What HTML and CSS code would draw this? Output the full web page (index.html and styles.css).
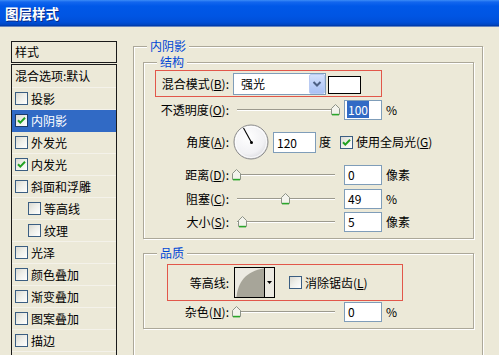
FILE: index.html
```html
<!DOCTYPE html>
<html lang="zh-CN">
<head>
<meta charset="utf-8">
<title>图层样式</title>
<link rel="stylesheet" href="styles.css">
</head>
<body>
<div class="titlebar">图层样式</div>
<div class="main">
  <div class="sidebar">
    <div class="side-head">样式</div>
    <ul class="style-list">
      <li class="item opt">混合选项:默认</li>
      <li class="item"><span class="cb"></span>投影</li>
      <li class="item selected"><span class="cb"><svg class="tick" viewBox="0 0 11 11"><path d="M2 5.2 L4.3 7.6 L9 2.8"/></svg></span>内阴影</li>
      <li class="item"><span class="cb"></span>外发光</li>
      <li class="item"><span class="cb"><svg class="tick" viewBox="0 0 11 11"><path d="M2 5.2 L4.3 7.6 L9 2.8"/></svg></span>内发光</li>
      <li class="item"><span class="cb"></span>斜面和浮雕</li>
      <li class="item sub"><span class="cb"></span>等高线</li>
      <li class="item sub"><span class="cb"></span>纹理</li>
      <li class="item"><span class="cb"></span>光泽</li>
      <li class="item"><span class="cb"></span>颜色叠加</li>
      <li class="item"><span class="cb"></span>渐变叠加</li>
      <li class="item"><span class="cb"></span>图案叠加</li>
      <li class="item"><span class="cb"></span>描边</li>
    </ul>
  </div>

  <fieldset class="group outer">
    <legend>内阴影</legend>

    <fieldset class="group inner struct">
      <legend>结构</legend>

      <div class="hlbox blend">
        <span class="lbl blend-lbl">混合模式(<u>B</u>):</span>
        <div class="select">
          <span class="select-val">强光</span>
          <span class="select-btn"><svg viewBox="0 0 16 20" width="16" height="20"><path d="M4.5 8 L8 11.5 L11.5 8" fill="none" stroke="#4d6185" stroke-width="2"/></svg></span>
        </div>
        <span class="swatch"></span>
      </div>

      <div class="row r-opacity">
        <span class="lbl">不透明度(<u>O</u>):</span>
        <div class="slider"><span class="track"></span><span class="thumb" style="left:99px"><svg viewBox="0 0 9 12" width="9" height="12"><path d="M0.5 4.5 L4.5 0.5 L8.5 4.5 V10.5 H0.5 Z" fill="#f3f3ec" stroke="#8d9387"/><path d="M1 10.6 H8" stroke="#2aa52a" stroke-width="1.6"/></svg></span></div>
        <div class="textbox w38"><span class="sel">100</span></div>
        <span class="unit">%</span>
      </div>

      <div class="row r-angle">
        <span class="lbl">角度(<u>A</u>):</span>
        <svg class="dial" viewBox="0 0 36 36" width="36" height="36">
          <defs>
            <radialGradient id="dialg" cx="0.4" cy="0.35" r="0.7">
              <stop offset="0" stop-color="#ffffff"/>
              <stop offset="0.7" stop-color="#f1f1f4"/>
              <stop offset="1" stop-color="#d9d9de"/>
            </radialGradient>
          </defs>
          <circle cx="18" cy="18" r="17" fill="url(#dialg)" stroke="#8a8a8a" stroke-width="1"/>
          <circle cx="18" cy="18" r="15.6" fill="none" stroke="#ffffff" stroke-width="0.8"/>
          <path d="M18.5 18.5 L10.5 4" stroke="#000" stroke-width="1.1"/>
          <circle cx="18.5" cy="18.5" r="1.5" fill="#000"/>
        </svg>
        <div class="textbox w43">120</div>
        <span class="deg">度</span>
        <span class="cb cb-global"><svg class="tick" viewBox="0 0 11 11"><path d="M2 5.2 L4.3 7.6 L9 2.8"/></svg></span>
        <span class="cb-text">使用全局光(<u>G</u>)</span>
      </div>

      <div class="row r-dist">
        <span class="lbl">距离(<u>D</u>):</span>
        <div class="slider"><span class="track"></span><span class="thumb" style="left:0px"><svg viewBox="0 0 9 12" width="9" height="12"><path d="M0.5 4.5 L4.5 0.5 L8.5 4.5 V10.5 H0.5 Z" fill="#f3f3ec" stroke="#8d9387"/><path d="M1 10.6 H8" stroke="#2aa52a" stroke-width="1.6"/></svg></span></div>
        <div class="textbox w38">0</div>
        <span class="unit">像素</span>
      </div>

      <div class="row r-choke">
        <span class="lbl">阻塞(<u>C</u>):</span>
        <div class="slider"><span class="track"></span><span class="thumb" style="left:49px"><svg viewBox="0 0 9 12" width="9" height="12"><path d="M0.5 4.5 L4.5 0.5 L8.5 4.5 V10.5 H0.5 Z" fill="#f3f3ec" stroke="#8d9387"/><path d="M1 10.6 H8" stroke="#2aa52a" stroke-width="1.6"/></svg></span></div>
        <div class="textbox w38">49</div>
        <span class="unit">%</span>
      </div>

      <div class="row r-size">
        <span class="lbl">大小(<u>S</u>):</span>
        <div class="slider"><span class="track"></span><span class="thumb" style="left:6px"><svg viewBox="0 0 9 12" width="9" height="12"><path d="M0.5 4.5 L4.5 0.5 L8.5 4.5 V10.5 H0.5 Z" fill="#f3f3ec" stroke="#8d9387"/><path d="M1 10.6 H8" stroke="#2aa52a" stroke-width="1.6"/></svg></span></div>
        <div class="textbox w38">5</div>
        <span class="unit">像素</span>
      </div>
    </fieldset>

    <fieldset class="group inner quality">
      <legend>品质</legend>

      <div class="hlbox contour-row">
        <span class="lbl contour-lbl">等高线:</span>
        <div class="contour">
          <svg class="contour-prev" viewBox="0 0 30 29" width="30" height="29">
            <rect x="0" y="0" width="30" height="29" fill="#eceae2"/>
            <path d="M1.5 29 C 3 14, 11 3, 29 0.5 L29 29 Z" fill="#a7a599"/>
            <path d="M29.5 0 V29" stroke="#000" stroke-width="1"/>
          </svg>
          <span class="contour-btn"><svg viewBox="0 0 9 29" width="9" height="29"><path d="M2 13 H7 L4.5 16 Z" fill="#000"/></svg></span>
        </div>
        <span class="cb cb-aa"></span>
        <span class="cb-text">消除锯齿(<u>L</u>)</span>
      </div>

      <div class="row r-noise">
        <span class="lbl">杂色(<u>N</u>):</span>
        <div class="slider"><span class="track"></span><span class="thumb" style="left:0px"><svg viewBox="0 0 9 12" width="9" height="12"><path d="M0.5 4.5 L4.5 0.5 L8.5 4.5 V10.5 H0.5 Z" fill="#f3f3ec" stroke="#8d9387"/><path d="M1 10.6 H8" stroke="#2aa52a" stroke-width="1.6"/></svg></span></div>
        <div class="textbox w38">0</div>
        <span class="unit">%</span>
      </div>
    </fieldset>
  </fieldset>
</div>
</body>
</html>
```

FILE: styles.css
```css
html, body {
  margin: 0;
  padding: 0;
}

body {
  width: 499px;
  height: 355px;
  overflow: hidden;
  background: #ece9d8;
  font-family: "Noto Sans CJK SC", "Noto Sans", "DejaVu Sans", sans-serif;
  font-size: 12px;
  line-height: 14px;
  color: #000;
}

u {
  text-decoration: underline;
  text-underline-offset: 1px;
}

/* ---------- title bar ---------- */
.titlebar {
  height: 27px;
  box-sizing: border-box;
  padding-left: 5px;
  line-height: 27px;
  color: #fff;
  font-weight: bold;
  font-size: 13.5px;
  text-shadow: 1px 1px 0 #0c2c86;
  background: linear-gradient(#3c8cf7 0px, #1366ee 2px, #0058e8 6px, #0055e3 16px, #004fd8 22px, #0045c0 25px, #00339a 26px, #c9d6e6 27px);
}

/* ---------- main area ---------- */
.main {
  display: flex;
  align-items: flex-start;
  padding: 13px 0 0 11px;
}

/* ---------- left style list ---------- */
.sidebar {
  width: 106px;
  margin-top: 1px;
  flex: none;
}

.side-head {
  height: 22px;
  box-sizing: border-box;
  border: 1px solid #1a1a1a;
  padding-left: 3px;
  line-height: 19px;
}

.style-list {
  list-style: none;
  margin: 1px 0 0;
  padding: 0;
  height: 291px;
  overflow: hidden;
  border: 1px solid #1a1a1a;
  border-bottom: none;
}

.item {
  height: 22px;
  box-sizing: border-box;
  display: flex;
  align-items: center;
  padding-left: 3px;
  border-bottom: 1px solid #f4f2ea;
  white-space: nowrap;
}

.item.opt {
  height: 23px;
}

.item.sub {
  padding-left: 16px;
}

.item.selected {
  background: #316ac5;
  color: #fff;
  border-bottom-color: #316ac5;
}

/* ---------- checkbox ---------- */
.cb {
  flex: none;
  width: 13px;
  height: 13px;
  box-sizing: border-box;
  border: 1px solid #3b5e82;
  background: linear-gradient(135deg, #dad9d1 0%, #eeeee9 45%, #ffffff 100%);
  margin-right: 3px;
  display: inline-flex;
}

.item.selected .cb {
  border-color: #1c3a6a;
}

.tick {
  width: 11px;
  height: 11px;
  fill: none;
  stroke: #21a121;
  stroke-width: 2;
}

/* ---------- group boxes ---------- */
.group {
  margin: 0;
  padding: 0;
  min-width: 0;
  border: 1px solid #aca899;
  box-shadow: inset 1px 1px 0 #fff, 1px 1px 0 #fff;
}

.group > legend {
  padding: 0 3px 2px;
  margin-left: 13px;
  line-height: 11px;
  height: 11px;
  color: #0046d5;
  background: #ece9d8;
}

.outer {
  margin-left: 16px;
  width: 350px;
  box-sizing: border-box;
  height: 316px;
  flex: none;
}

.inner {
  margin: 3px 8px 0 9px;
}

.struct {
  padding-bottom: 6px;
}

.quality {
  margin-top: 8px;
  padding-bottom: 6px;
}

/* ---------- rows ---------- */
.row {
  display: flex;
  align-items: center;
  height: 20px;
}

.lbl {
  flex: none;
  width: 85px;
  text-align: right;
  white-space: nowrap;
}

.r-opacity { margin-top: 3px; }
.r-angle { margin-top: 4px; height: 36px; }
.r-dist { margin-top: 5px; }
.r-choke { margin-top: 4px; }
.r-size { margin-top: 3px; }
.r-noise { margin-top: 1px; }

/* highlighted (red framed) rows */
.hlbox {
  display: flex;
  align-items: center;
  box-sizing: border-box;
  border: 1px solid #e2574a;
}

.blend {
  margin: 1px 0 0 11px;
  width: 227px;
  height: 27px;
}

.blend-lbl {
  width: 73px;
}

.contour-row {
  margin: 4px 0 0 23px;
  width: 236px;
  height: 37px;
}

.contour-lbl {
  width: 61px;
}

/* select */
.select {
  flex: none;
  margin-left: 4px;
  width: 93px;
  height: 22px;
  box-sizing: border-box;
  border: 1px solid #7f9db9;
  background: #fff;
  display: flex;
  align-items: center;
  padding: 0 0 0 7px;
}

.select-val {
  flex: 1;
}

.select-btn {
  width: 16px;
  height: 20px;
  box-sizing: border-box;
  border: 1px solid #b9cbf3;
  border-radius: 2px;
  background: linear-gradient(#d4e1fc, #b8cdf8 60%, #aac2f5);
  display: flex;
}

.select-btn svg {
  margin: -1px;
}

.swatch {
  flex: none;
  margin-left: 2px;
  width: 33px;
  height: 18px;
  box-sizing: border-box;
  border: 1px solid #000;
  background: #fff;
  margin-top: 3px;
}

/* slider */
.slider {
  position: relative;
  flex: none;
  width: 108px;
  height: 14px;
  margin-left: 3px;
}

.track {
  display: block;
  margin: 6px 5px 0;
  border-top: 1px solid #9c9a8e;
  border-bottom: 1px solid #ffffff;
}

.thumb {
  position: absolute;
  top: 1px;
  width: 9px;
  height: 12px;
  display: block;
}

.thumb svg {
  display: block;
}

/* text boxes */
.textbox {
  flex: none;
  box-sizing: border-box;
  height: 20px;
  border: 1px solid #7f9db9;
  background: #fff;
  padding-left: 3px;
  line-height: 18px;
  margin-left: 4px;
}

.w38 { width: 38px; }
.w43 { width: 43px; height: 21px; line-height: 19px; }

.sel {
  background: #316ac5;
  color: #fff;
  padding: 0 1px;
  margin-left: -1px;
}

.unit {
  margin-left: 4px;
  white-space: nowrap;
}

/* angle */
.dial {
  flex: none;
  margin-left: 4px;
  display: block;
}

.deg {
  margin-left: 3px;
}

.cb-global {
  margin-left: 9px;
}

.cb-text {
  white-space: nowrap;
}

/* contour */
.contour {
  flex: none;
  margin-left: 5px;
  width: 41px;
  height: 31px;
  box-sizing: border-box;
  border: 1px solid #000;
  display: flex;
  background: #eceae2;
}

.contour-prev {
  display: block;
}

.contour-btn {
  display: block;
  width: 9px;
}

.contour-btn svg {
  display: block;
}

.cb-aa {
  margin-left: 14px;
}
```
